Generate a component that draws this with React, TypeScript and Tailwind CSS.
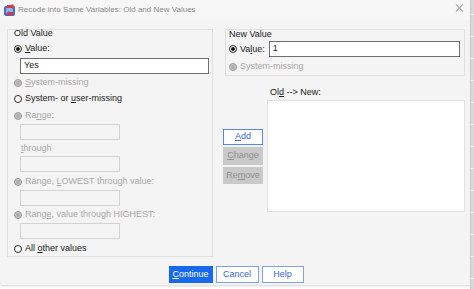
import React from 'react'

const font = { fontFamily: '"Liberation Sans", Arial, sans-serif' }

function Radio({ state }: { state: 'on' | 'off' | 'disabled' }) {
  if (state === 'disabled') {
    return (
      <span className="w-[8px] h-[8px] rounded-full border border-[#9c9c9c] bg-[#c2c2c2] shrink-0 flex items-center justify-center">
        <span className="w-[4px] h-[4px] rounded-full bg-[#b0b0b0]" />
      </span>
    )
  }
  return (
    <span className="w-[8px] h-[8px] rounded-full border border-[#2a2a2a] bg-white shrink-0 flex items-center justify-center">
      {state === 'on' && <span className="w-[4px] h-[4px] rounded-full bg-[#1a1a1a]" />}
    </span>
  )
}

function RadioRow({
  state,
  children,
  className = '',
}: {
  state: 'on' | 'off' | 'disabled'
  children: React.ReactNode
  className?: string
}) {
  const disabled = state === 'disabled'
  return (
    <div className={`flex items-center h-[11px] gap-[3px] ${className}`}>
      <Radio state={state} />
      <span className={`text-[9px] leading-[11px] ${disabled ? 'text-[#a9a9a9]' : 'text-[#1a1a1a]'}`}>
        {children}
      </span>
    </div>
  )
}

function DisabledInput({ className = '' }: { className?: string }) {
  return <div className={`w-[100px] h-[16px] border border-[#d2d2d2] bg-[#f4f4f4] ml-[6px] ${className}`} />
}

function RecodeIcon() {
  return (
    <svg width="14" height="13" viewBox="0 0 14 13">
      <rect x="1" y="2" width="11" height="10" rx="2" fill="#3b73c8" />
      <rect x="3" y="4" width="7" height="6" rx="1" fill="#8fb4e8" />
      <path d="M4 1 L9 1 L9 0 L12 2.5 L9 5 L9 4 L4 4 Z" fill="#e0344a" />
      <path d="M10 8 L6 8 L6 7 L3 9.5 L6 12 L6 11 L10 11 Z" fill="#e0344a" />
    </svg>
  )
}

export default function App() {
  return (
    <div className="w-[474px] h-[289px] bg-white flex overflow-hidden" style={font}>
      <div className="w-[470px] h-[286px] bg-[#f4f4f4] rounded-bl-[4px] flex flex-col border-b border-[#e2e2e2] shadow-[0_1px_2px_rgba(0,0,0,0.08)]">
        {/* Title bar */}
        <div className="w-full h-[20px] flex items-center justify-between pl-[3px] pr-[7px] bg-[#f7f7f7]">
          <div className="flex items-center">
            <RecodeIcon />
            <span className="ml-[1px] text-[8px] text-[#8a8a8a] leading-[12px]">
              Recode into Same Variables: Old and New Values
            </span>
          </div>
          <div className="w-[8px] h-[8px] relative -mt-[4px]">
            <div className="absolute left-[3.5px] top-[-1px] w-[1px] h-[10px] bg-[#a4a4a4] rotate-45" />
            <div className="absolute left-[3.5px] top-[-1px] w-[1px] h-[10px] bg-[#a4a4a4] -rotate-45" />
          </div>
        </div>

        {/* Body */}
        <div className="flex pl-[7px] pt-[9px]">
          {/* Old Value */}
          <div className="w-[206px] h-[228px] border border-[#e0e0e0] flex flex-col pl-[6px]">
            <div className="h-[10px] leading-[10px] -mt-[2px] text-[9px] text-[#1a1a1a]">Old Value</div>
            <RadioRow state="on" className="mt-[5px]">
              <span className="underline">V</span>alue:
            </RadioRow>
            <div className="w-[189px] h-[16px] border border-[#6e6e6e] bg-white ml-[6px] mt-[4px] flex items-center pl-[3px] text-[9px] text-[#1a1a1a]">
              Yes
            </div>
            <RadioRow state="disabled" className="mt-[3px]">
              <span className="underline">S</span>ystem-missing
            </RadioRow>
            <RadioRow state="off" className="mt-[5px]">
              System- or <span className="underline">u</span>ser-missing
            </RadioRow>
            <RadioRow state="disabled" className="mt-[6px]">
              Ra<span className="underline">n</span>ge:
            </RadioRow>
            <DisabledInput className="mt-[3px]" />
            <div className="h-[11px] mt-[3px] ml-[7px] text-[9px] leading-[11px] text-[#a9a9a9]">
              <span className="underline">t</span>hrough
            </div>
            <DisabledInput className="mt-[2px]" />
            <RadioRow state="disabled" className="mt-[4px]">
              Range, <span className="underline">L</span>OWEST through value:
            </RadioRow>
            <DisabledInput className="mt-[3px]" />
            <RadioRow state="disabled" className="mt-[3px]">
              Rang<span className="underline">e</span>, value through HIGHEST:
            </RadioRow>
            <DisabledInput className="mt-[3px]" />
            <RadioRow state="off" className="mt-[4px]">
              All <span className="underline">o</span>ther values
            </RadioRow>
          </div>

          {/* Right side */}
          <div className="ml-[10px] w-[242px] flex flex-col">
            <div className="ml-[2px] w-[240px] h-[47px] border border-[#e0e0e0] flex flex-col pl-[3px]">
              <div className="h-[10px] leading-[10px] -mt-[1px] text-[9px] text-[#1a1a1a]">New Value</div>
              <div className="flex items-center mt-[2px] h-[16px]">
                <RadioRow state="on">
                  Va<span className="underline">l</span>ue:
                </RadioRow>
                <div className="ml-[4px] w-[191px] h-[16px] border border-[#6e6e6e] bg-white flex items-center pl-[3px] text-[9px] text-[#1a1a1a]">
                  1
                </div>
              </div>
              <RadioRow state="disabled" className="mt-[4px]">
                System-missing
              </RadioRow>
            </div>

            <div className="flex">
              {/* Buttons column */}
              <div className="w-[40px] flex flex-col gap-[2px] pt-[53px]">
                <div className="h-[16px] border border-[#5b86e6] bg-white flex items-center justify-center text-[9px] text-[#3a66d6]">
                  <span className="underline">A</span>dd
                </div>
                <div className="h-[18px] bg-[#c9c9c9] flex items-center justify-center text-[9px] text-[#8e8e8e]">
                  <span className="underline">C</span>hange
                </div>
                <div className="h-[17px] bg-[#c9c9c9] flex items-center justify-center text-[9px] text-[#8e8e8e]">
                  Re<span className="underline">m</span>ove
                </div>
              </div>
              {/* List */}
              <div className="ml-[4px] flex flex-col">
                <div className="h-[12px] leading-[12px] mt-[10px] ml-[3px] text-[9px] text-[#1a1a1a]">
                  Ol<span className="underline">d</span> --&gt; New:
                </div>
                <div className="mt-[2px] w-[198px] h-[112px] bg-white border border-[#e2e2e2]" />
              </div>
            </div>
          </div>
        </div>

        {/* Bottom buttons */}
        <div className="flex justify-center gap-[3px] mt-[9px] pl-[2px]">
          <div className="w-[44px] h-[17px] bg-[#1769ee] flex items-center justify-center text-[9px] text-white">
            <span className="underline">C</span>ontinue
          </div>
          <div className="w-[43px] h-[17px] bg-white border border-[#7ea2ee] flex items-center justify-center text-[9px] text-[#3a66d6]">
            Cancel
          </div>
          <div className="w-[42px] h-[17px] bg-white border border-[#7ea2ee] flex items-center justify-center text-[9px] text-[#3a66d6]">
            Help
          </div>
        </div>
      </div>

      {/* Background strip at right edge */}
      <div className="w-[4px] h-full bg-[#d9d9d9] border-l border-[#c8c8c8] flex flex-col gap-[21px] pt-[14px]">
        {Array.from({ length: 13 }).map((_, i) => (
          <div key={i} className="h-[1px] w-full bg-[#eeeeee]" />
        ))}
      </div>
    </div>
  )
}
